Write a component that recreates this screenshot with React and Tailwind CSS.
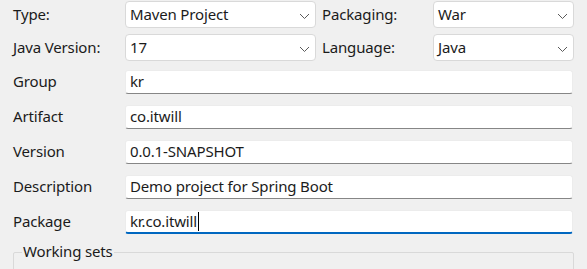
const font = { fontFamily: '"Noto Sans", "Open Sans", sans-serif' };

function Chevron() {
  return (
    <svg width="11" height="7" viewBox="0 0 11 7" className="absolute right-[5px] top-[11px]">
      <path d="M1 1 L5.5 5.5 L10 1" fill="none" stroke="#5a5a5a" strokeWidth="1" />
    </svg>
  );
}

function Combo({ value, width }) {
  return (
    <div
      className={`relative h-[27px] ${width} bg-white border border-[#d9d9d9] rounded-[4px] flex items-center pl-[4px] text-[15px] text-[#1b1b1b]`}
    >
      {value}
      <Chevron />
    </div>
  );
}

function Field({ label, value, focused }) {
  return (
    <div className="flex items-center h-[35px]">
      <div className="w-[112px] text-[15px] text-[#1b1b1b]">{label}</div>
      <div
        className={`h-[24px] w-[448px] bg-white rounded-[3px] border border-[#ececec] flex items-center pl-[4px] text-[15px] text-[#1b1b1b] ${
          focused ? "border-b-2 border-b-[#0067c0]" : "border-b-[#868686]"
        }`}
      >
        {value}
        {focused && <span className="inline-block w-px h-[19px] bg-black ml-px" />}
      </div>
    </div>
  );
}

export default function App() {
  return (
    <div
      className="w-[587px] h-[269px] bg-[#f0f0f0] overflow-hidden pl-[13px] pt-[1px] tracking-[-0.15px]"
      style={font}
    >
      <div className="flex items-center h-[27px]">
        <div className="w-[112px] text-[15px] text-[#1b1b1b]">Type:</div>
        <Combo value="Maven Project" width="w-[191px]" />
        <div className="w-[117px] pl-[6px] text-[15px] text-[#1b1b1b]">Packaging:</div>
        <Combo value="War" width="w-[141px]" />
      </div>
      <div className="flex items-center h-[27px] mt-[6px]">
        <div className="w-[112px] text-[15px] text-[#1b1b1b]">Java Version:</div>
        <Combo value="17" width="w-[191px]" />
        <div className="w-[117px] pl-[6px] text-[15px] text-[#1b1b1b]">Language:</div>
        <Combo value="Java" width="w-[141px]" />
      </div>
      <div className="mt-[3px]">
        <Field label="Group" value="kr" />
        <Field label="Artifact" value="co.itwill" />
        <Field label="Version" value="0.0.1-SNAPSHOT" />
        <Field label="Description" value="Demo project for Spring Boot" />
        <Field label="Package" value="kr.co.itwill" focused />
      </div>
      <div className="relative mt-[13px] w-[561px] h-[40px] border border-[#d9d9d9] rounded-[2px]">
        <span className="absolute left-[8px] top-[-12px] bg-[#f0f0f0] px-[1px] text-[15px] text-[#1b1b1b] leading-[20px]">
          Working sets
        </span>
      </div>
    </div>
  );
}
